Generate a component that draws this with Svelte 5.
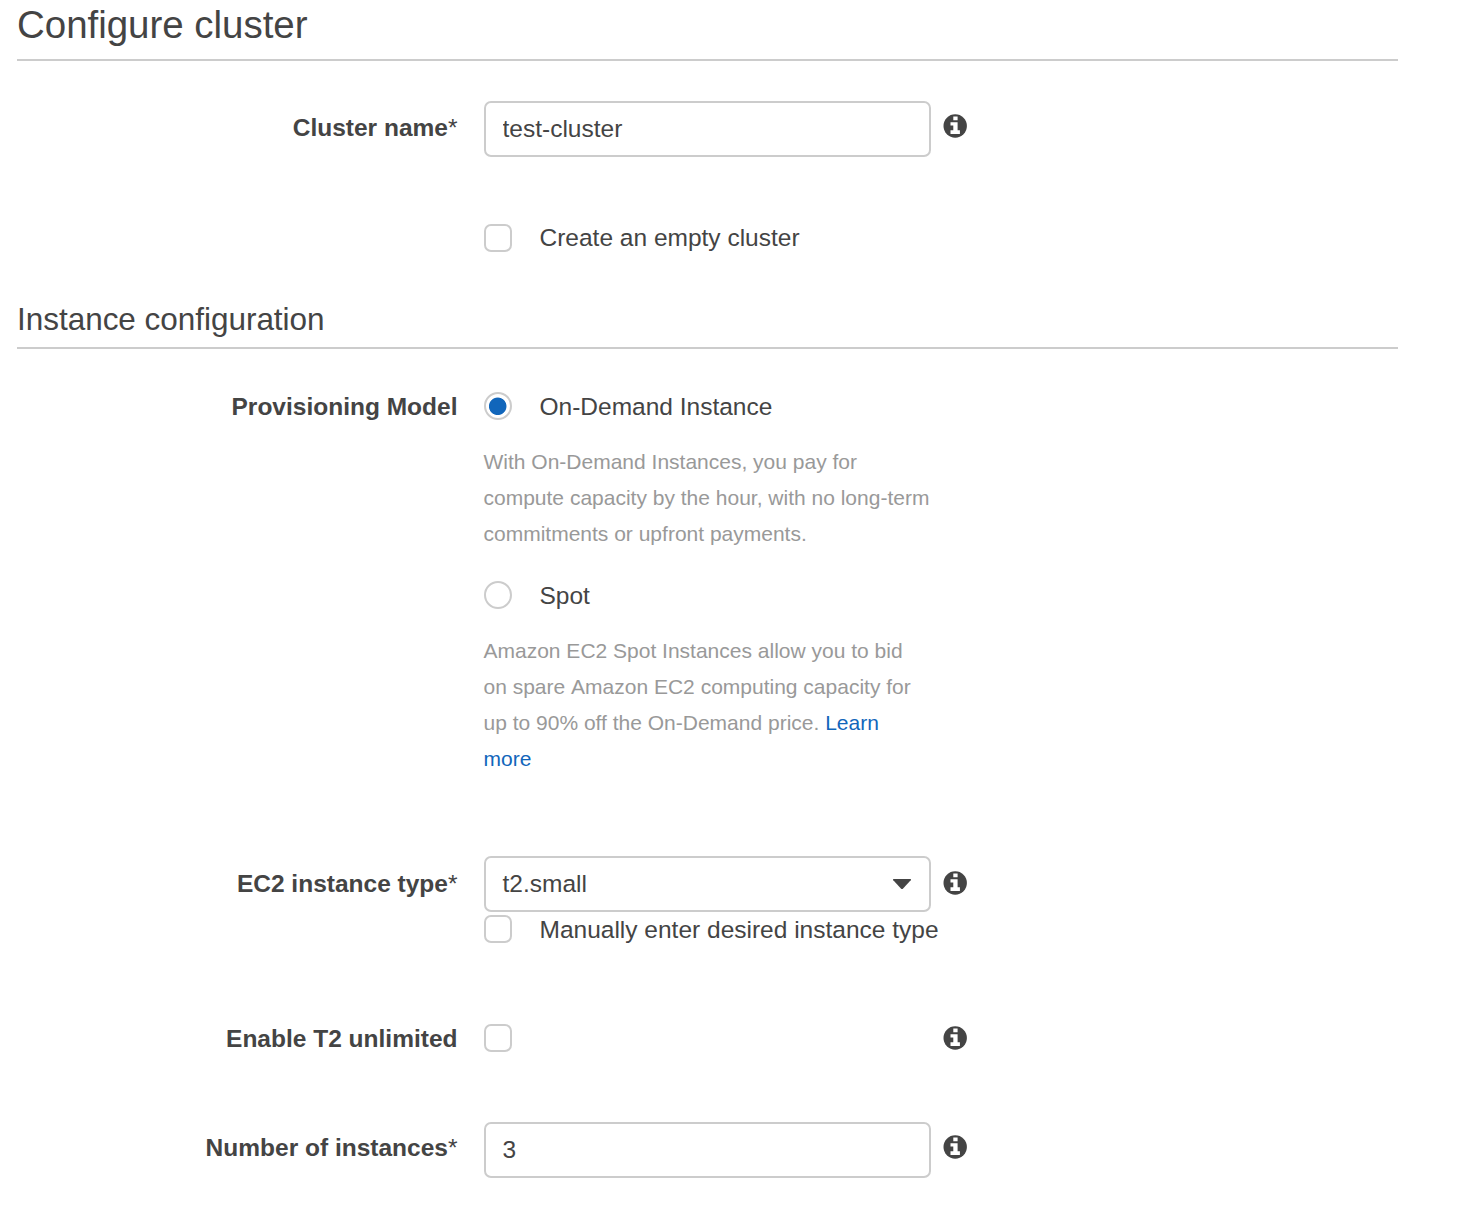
<script>
  let name = $state('test-cluster');
  let count = $state('3');
  let empty = $state(false);
  let manual = $state(false);
  let unlimited = $state(false);
  let model = $state('ondemand');
</script>

{#snippet info()}
  <svg class="info" viewBox="0 0 24 24" aria-label="Info">
    <circle cx="12.2" cy="12" r="11.7" fill="#444" />
    <path fill="#fff" d="M10.3 2.5h4.3v3.7h-4.3zM7.5 8.2h7.1v8.1h2.3v3.6H7.5v-3.6h2.8v-4.7H7.5z" />
  </svg>
{/snippet}

<main>
  <h1>Configure cluster</h1>

  <div class="row name">
    <label class="label" for="name">Cluster name<span>*</span></label>
    <input id="name" class="box" bind:value={name} />
    {@render info()}
  </div>

  <div class="row empty">
    <label class="choice second">
      <input type="checkbox" bind:checked={empty} />
      <span>Create an empty cluster</span>
    </label>
  </div>

  <h2>Instance configuration</h2>

  <div class="row model">
    <div class="label">Provisioning Model</div>
    <div class="field">
      <label class="choice low">
        <input type="radio" value="ondemand" bind:group={model} />
        <span>On-Demand Instance</span>
      </label>
      <p>
        With On-Demand Instances, you pay for<br />compute capacity by the hour, with no long-term<br />commitments or upfront payments.
      </p>
      <label class="choice low">
        <input type="radio" value="spot" bind:group={model} />
        <span>Spot</span>
      </label>
      <p>
        Amazon EC2 Spot Instances allow you to bid<br />on spare <span class="plain">Amazon</span> EC2 computing capacity for<br />up to 90% off the On-Demand price. <a href="#learn">Learn<br />more</a>
      </p>
    </div>
  </div>

  <div class="row type">
    <div class="label">EC2 instance type<span>*</span></div>
    <div class="field">
      <div class="box select">
        <span>t2.small</span>
        <svg class="caret" viewBox="0 0 20 12"><path fill="#444" d="M1.8 1h16.4q1.5 0 .5 1.2l-7.6 8.2q-1.1 1.1-2.2 0L1.3 2.2Q.3 1 1.8 1z" /></svg>
      </div>
      <label class="choice low">
        <input type="checkbox" bind:checked={manual} />
        <span>Manually enter desired instance type</span>
      </label>
    </div>
    {@render info()}
  </div>

  <div class="row unlimited">
    <label class="label" for="unlimited">Enable T2 unlimited</label>
    <div class="choice"><input id="unlimited" type="checkbox" bind:checked={unlimited} /></div>
    {@render info()}
  </div>

  <div class="row count">
    <label class="label" for="count">Number of instances<span>*</span></label>
    <input id="count" class="box" bind:value={count} />
    {@render info()}
  </div>
</main>

<style>
  :global(body) {
    margin: 0;
    background: #fff;
  }
  main {
    box-sizing: border-box;
    width: 1398px;
    height: 1216px;
    padding-left: 17px;
    overflow: hidden;
    font: 24.5px/28px 'Liberation Sans', Arial, sans-serif;
    color: #444;
  }
  h1,
  h2 {
    box-sizing: border-box;
    margin: 0;
    border-bottom: 2px solid #ccc;
    font-weight: 400;
    letter-spacing: -0.03px;
  }
  h1 {
    height: 61px;
    padding-top: 3px;
    font-size: 38.5px;
    line-height: 44px;
  }
  h2 {
    height: 48px;
    margin-top: 49px;
    font-size: 31.5px;
    line-height: 36px;
  }
  .row {
    display: grid;
    grid-template-columns: 440.5px 447px 24px;
    column-gap: 26px;
    align-items: start;
  }
  .row .info {
    margin-left: -14px;
  }
  .label {
    padding-top: 1px;
    font-weight: 700;
    text-align: right;
  }
  .label span {
    font-weight: 400;
  }
  .plain {
    font-kerning: none;
  }
  .name {
    margin-top: 40px;
  }
  .name .label {
    padding-top: 13px;
  }
  .name .info {
    margin-top: 13px;
  }
  .empty {
    margin-top: 67px;
  }
  .second {
    grid-column: 2;
  }
  .model {
    margin-top: 43px;
  }
  .type {
    margin-top: 79px;
  }
  .type .label {
    padding-top: 14px;
  }
  .type .info {
    margin-top: 15px;
  }
  .type .choice {
    margin-top: 3px;
  }
  .unlimited {
    margin-top: 81px;
  }
  .unlimited .info {
    margin-top: 2px;
  }
  .count {
    margin-top: 69px;
  }
  .count .label {
    padding-top: 12px;
  }
  .count .info {
    margin-top: 13px;
  }
  .box {
    box-sizing: border-box;
    width: 447px;
    height: 56px;
    margin: 0;
    padding: 0 17px;
    border: 2px solid #ccc;
    border-radius: 7px;
    background: #fff;
    font: inherit;
    color: #444;
    outline: none;
  }
  .select {
    display: flex;
    align-items: center;
    justify-content: space-between;
  }
  .caret {
    width: 20px;
    height: 12px;
  }
  .choice {
    display: flex;
    gap: 28px;
    height: 28px;
    white-space: nowrap;
  }
  .low span {
    padding-top: 1px;
  }
  .choice input {
    appearance: none;
    box-sizing: border-box;
    flex: none;
    width: 28px;
    height: 28px;
    margin: 0;
    border: 2px solid #ccc;
    border-radius: 7px;
    background: #fff;
  }
  .choice input[type='radio'] {
    border-radius: 50%;
  }
  .choice input[type='radio']:checked {
    background: radial-gradient(circle at 11.7px 12.3px, #1166bb 8.3px, #fff 9.2px);
  }
  p {
    margin: 24px 0 29px;
    font-size: 21px;
    line-height: 36px;
    color: #999;
    white-space: nowrap;
  }
  p:last-child {
    margin-bottom: 0;
  }
  a {
    color: #1166bb;
    text-decoration: none;
  }
  .info {
    display: block;
    width: 24px;
    height: 24px;
  }
</style>
